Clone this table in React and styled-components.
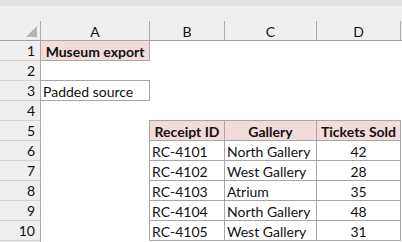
import React from "react";
import styled, { createGlobalStyle } from "styled-components";

const Global = createGlobalStyle`
  html, body { margin: 0; padding: 0; background: #ffffff; overflow: hidden; }
  body { font-family: "Lato", "Liberation Sans", sans-serif; color: #111; }
`;

const Page = styled.div`
  width: 402px;
  height: 242px;
  overflow: hidden;
  background: #ffffff;
`;

const TopStrip = styled.div`
  height: 6px;
  background: #e2e2e2;
`;

const BarSpace = styled.div`
  height: 15px;
  background: #efefef;
`;

const Sheet = styled.div`
  display: grid;
  grid-template-columns: 41px 109px 75px 92px 84px 1fr;
  grid-auto-rows: 20px;
  font-size: 14px;
`;

const Corner = styled.div`
  background: #efefef;
  border-right: 1px solid #ababab;
  border-bottom: 1px solid #9f9f9f;
  display: flex;
  align-items: flex-end;
  justify-content: flex-end;
  padding: 0 3px 3px 0;
`;

const ColHead = styled.div`
  background: #efefef;
  border-right: ${(p) => (p.$last ? "none" : "1px solid #ababab")};
  border-bottom: 1px solid #9f9f9f;
  display: flex;
  align-items: center;
  justify-content: center;
  line-height: 1;
  padding-top: 3px;
`;

const RowHead = styled.div`
  background: #efefef;
  border-right: 1px solid #ababab;
  border-bottom: 1px solid #d4d4d4;
  display: flex;
  align-items: center;
  justify-content: flex-end;
  padding-right: 5px;
  padding-top: 1px;
  line-height: 1;
`;

const Empty = styled.div`
  background: #ffffff;
`;

const Cell = styled.div`
  margin: -1px 0 0 -1px;
  border: 1px solid #a6a6a6;
  background: ${(p) => (p.$fill ? "#f2dcdb" : "#ffffff")};
  font-weight: ${(p) => (p.$bold ? 700 : 400)};
  display: flex;
  align-items: center;
  justify-content: ${(p) => (p.$align === "center" ? "center" : "flex-start")};
  padding-left: ${(p) => (p.$align === "center" ? "0" : "2px")};
  padding-top: 2px;
  white-space: nowrap;
  overflow: hidden;
  line-height: 1;
`;

const cols = ["A", "B", "C", "D"];

const table = [
  ["RC-4101", "North Gallery", "42"],
  ["RC-4102", "West Gallery", "28"],
  ["RC-4103", "Atrium", "35"],
  ["RC-4104", "North Gallery", "48"],
  ["RC-4105", "West Gallery", "31"],
];

function Row({ n, children }) {
  return (
    <>
      <RowHead>{n}</RowHead>
      {children}
    </>
  );
}

export default function App() {
  return (
    <Page>
      <Global />
      <TopStrip />
      <BarSpace />
      <Sheet>
        <Corner>
          <svg width="11" height="11" viewBox="0 0 11 11">
            <polygon points="11,0 11,11 0,11" fill="#b5b5b5" />
          </svg>
        </Corner>
        {cols.map((c) => (
          <ColHead key={c}>{c}</ColHead>
        ))}
        <ColHead $last />

        <Row n={1}>
          <Cell $fill $bold $align="center">Museum export</Cell>
          <Empty /><Empty /><Empty /><Empty />
        </Row>
        <Row n={2}>
          <Empty /><Empty /><Empty /><Empty /><Empty />
        </Row>
        <Row n={3}>
          <Cell>Padded source</Cell>
          <Empty /><Empty /><Empty /><Empty />
        </Row>
        <Row n={4}>
          <Empty /><Empty /><Empty /><Empty /><Empty />
        </Row>
        <Row n={5}>
          <Empty />
          <Cell $fill $bold $align="center">Receipt ID</Cell>
          <Cell $fill $bold $align="center">Gallery</Cell>
          <Cell $fill $bold $align="center">Tickets Sold</Cell>
          <Empty />
        </Row>
        {table.map((r, i) => (
          <Row key={r[0]} n={6 + i}>
            <Empty />
            <Cell>{r[0]}</Cell>
            <Cell>{r[1]}</Cell>
            <Cell $align="center">{r[2]}</Cell>
            <Empty />
          </Row>
        ))}
        <Row n="">
          <Empty /><Empty /><Empty /><Empty /><Empty />
        </Row>
      </Sheet>
    </Page>
  );
}
